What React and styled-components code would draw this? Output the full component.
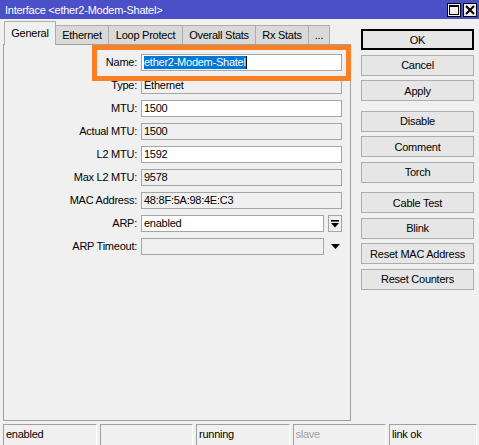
import React from "react";
import styled, { createGlobalStyle } from "styled-components";

const GlobalStyle = createGlobalStyle`
  html, body {
    margin: 0;
    padding: 0;
    background: #f0f0f0;
  }
  body {
    font-family: "Liberation Sans", Arial, sans-serif;
    font-size: 11px;
    letter-spacing: -0.25px;
    color: #000;
  }
`;

const tabs = ["General", "Ethernet", "Loop Protect", "Overall Stats", "Rx Stats", "..."];
const tabWidths = [52, 54, 75, 74, 54, 22];

const fields = [
  { label: "Name:", value: "ether2-Modem-Shatel", edit: true, selected: true },
  { label: "Type:", value: "Ethernet" },
  { label: "MTU:", value: "1500", edit: true },
  { label: "Actual MTU:", value: "1500" },
  { label: "L2 MTU:", value: "1592", edit: true },
  { label: "Max L2 MTU:", value: "9578" },
  { label: "MAC Address:", value: "48:8F:5A:98:4E:C3" },
  { label: "ARP:", value: "enabled", edit: true, addon: "button" },
  { label: "ARP Timeout:", value: "", addon: "arrow" },
];

const buttonGroups = [
  ["OK", "Cancel", "Apply"],
  ["Disable", "Comment", "Torch"],
  ["Cable Test", "Blink", "Reset MAC Address", "Reset Counters"],
];

const status = [
  { text: "enabled" },
  { text: "" },
  { text: "running" },
  { text: "slave", dim: true },
  { text: "link ok" },
];

const App = () => {
  return (
    <>
      <GlobalStyle />
      <Window>
        <TitleBar>
          <Title>Interface &lt;ether2-Modem-Shatel&gt;</Title>
          <WinButtons>
            <WinButton>
              <svg width="10" height="10" viewBox="0 0 10 10">
                <rect x="0.5" y="0.5" width="9" height="9" fill="none" stroke="#000" />
                <rect x="0" y="0" width="10" height="2" fill="#000" />
              </svg>
            </WinButton>
            <WinButton>
              <svg width="10" height="10" viewBox="0 0 10 10">
                <path d="M1 1 L9 9 M9 1 L1 9" stroke="#000" strokeWidth="2" />
              </svg>
            </WinButton>
          </WinButtons>
        </TitleBar>

        <Body>
          <LeftColumn>
            <TabStrip>
              {tabs.map((t, i) => (
                <Tab key={t} $active={i === 0} $w={tabWidths[i]}>
                  {t}
                </Tab>
              ))}
            </TabStrip>
            <Panel>
              <Highlight />
              <Form>
                {fields.map((f) => (
                  <React.Fragment key={f.label}>
                    <Label>{f.label}</Label>
                    <FieldCell>
                      <Field $edit={f.edit}>
                        {f.selected ? (
                          <>
                            <Selected>{f.value}</Selected>
                            <Caret />
                          </>
                        ) : (
                          f.value
                        )}
                      </Field>
                      {f.addon === "button" && (
                        <DropButton>
                          <svg width="8" height="8" viewBox="0 0 8 8">
                            <rect x="0" y="0" width="8" height="1.6" fill="#000" />
                            <polygon points="0,3 8,3 4,7.5" fill="#000" />
                          </svg>
                        </DropButton>
                      )}
                      {f.addon === "arrow" && (
                        <DropArrow>
                          <svg width="9" height="5" viewBox="0 0 9 5">
                            <polygon points="0,0 9,0 4.5,5" fill="#000" />
                          </svg>
                        </DropArrow>
                      )}
                    </FieldCell>
                  </React.Fragment>
                ))}
              </Form>
            </Panel>
          </LeftColumn>

          <ButtonColumn>
            {buttonGroups.map((g, gi) => (
              <ButtonGroup key={gi}>
                {g.map((b) => (
                  <Button key={b} $default={b === "OK"}>
                    {b}
                  </Button>
                ))}
              </ButtonGroup>
            ))}
          </ButtonColumn>
        </Body>

        <StatusBar>
          {status.map((s, i) => (
            <StatusCell key={i} $dim={s.dim}>
              {s.text}
            </StatusCell>
          ))}
        </StatusBar>
      </Window>
    </>
  );
};

const Window = styled.div`
  width: 479px;
  height: 445px;
  display: flex;
  flex-direction: column;
  overflow: hidden;
  background: #f0f0f0;
`;

const TitleBar = styled.div`
  height: 19px;
  flex: 0 0 19px;
  background: #4b4fc8;
  color: #fff;
  display: flex;
  align-items: center;
  justify-content: space-between;
  padding: 0 2px 0 5px;
  box-sizing: border-box;
`;

const Title = styled.div`
  font-size: 11px;
`;

const WinButtons = styled.div`
  display: flex;
  gap: 2px;
`;

const WinButton = styled.div`
  width: 14px;
  height: 14px;
  box-sizing: border-box;
  border: 1px solid #000;
  background: #f0f0f0;
  display: flex;
  align-items: center;
  justify-content: center;
`;

const Body = styled.div`
  flex: 1;
  display: flex;
  padding: 2px 5px 0 3px;
  min-height: 0;
`;

const LeftColumn = styled.div`
  width: 348px;
  display: flex;
  flex-direction: column;
`;

const TabStrip = styled.div`
  height: 23px;
  flex: 0 0 23px;
  display: flex;
  align-items: flex-end;
  padding-left: 1px;
  position: relative;
  z-index: 1;
`;

const Tab = styled.div`
  width: ${(p) => p.$w}px;
  box-sizing: border-box;
  height: ${(p) => (p.$active ? 24 : 19)}px;
  margin-bottom: ${(p) => (p.$active ? -1 : 0)}px;
  margin-left: -1px;
  border: 1px solid #adadad;
  border-bottom: none;
  background: ${(p) => (p.$active ? "#f0f0f0" : "#d9d9d9")};
  text-align: center;
  line-height: ${(p) => (p.$active ? 20 : 18)}px;
  padding-top: ${(p) => (p.$active ? 1 : 0)}px;
  white-space: nowrap;
  &:first-child {
    margin-left: 0;
  }
`;

const Panel = styled.div`
  flex: 1;
  border: 1px solid #a0a0a0;
  position: relative;
  padding: 9px 8px 0 0;
`;

const Highlight = styled.div`
  position: absolute;
  left: 88px;
  top: 0;
  right: -1px;
  height: 36px;
  box-sizing: border-box;
  border: 5.5px solid #fb8024;
  pointer-events: none;
`;

const Form = styled.div`
  display: grid;
  grid-template-columns: 133px 1fr;
  grid-auto-rows: 17px;
  column-gap: 4px;
  row-gap: 6px;
`;

const Label = styled.div`
  text-align: right;
  line-height: 17px;
  white-space: nowrap;
`;

const FieldCell = styled.div`
  display: flex;
  align-items: stretch;
  gap: 4px;
`;

const Field = styled.div`
  flex: 1;
  box-sizing: border-box;
  border: 1px solid #a5a5a5;
  background: ${(p) => (p.$edit ? "#fff" : "#f0f0f0")};
  padding-left: 2px;
  line-height: 15px;
  white-space: nowrap;
  display: flex;
  align-items: center;
`;

const Selected = styled.span`
  background: #0078d7;
  color: #fff;
  line-height: 13px;
`;

const Caret = styled.span`
  width: 1px;
  height: 13px;
  background: #000;
`;

const DropButton = styled.div`
  width: 14px;
  box-sizing: border-box;
  border: 1px solid #a5a5a5;
  background: #f0f0f0;
  display: flex;
  align-items: center;
  justify-content: center;
`;

const DropArrow = styled.div`
  width: 14px;
  display: flex;
  align-items: center;
  justify-content: center;
`;

const ButtonColumn = styled.div`
  width: 113px;
  margin: 8px 0 0 10px;
  display: flex;
  flex-direction: column;
  gap: 9.5px;
`;

const ButtonGroup = styled.div`
  display: flex;
  flex-direction: column;
  gap: 4.5px;
`;

const Button = styled.div`
  height: 21px;
  box-sizing: border-box;
  border: 1px solid ${(p) => (p.$default ? "#000" : "#adadad")};
  box-shadow: ${(p) => (p.$default ? "inset 0 0 0 1px #000" : "none")};
  background: #e6e6e6;
  display: flex;
  align-items: center;
  justify-content: center;
  white-space: nowrap;
`;

const StatusBar = styled.div`
  flex: 0 0 21px;
  height: 21px;
  margin-top: 3px;
  display: flex;
  gap: 3px;
  padding: 0 2px 0 3px;
`;

const StatusCell = styled.div`
  width: 93.5px;
  box-sizing: border-box;
  border-top: 1px solid #a0a0a0;
  border-left: 1px solid #a0a0a0;
  border-right: 1px solid #fff;
  padding-left: 2px;
  line-height: 19px;
  color: ${(p) => (p.$dim ? "#a0a0a0" : "#000")};
  white-space: nowrap;
  &:last-child {
    flex: 1;
  }
`;

export default App;
